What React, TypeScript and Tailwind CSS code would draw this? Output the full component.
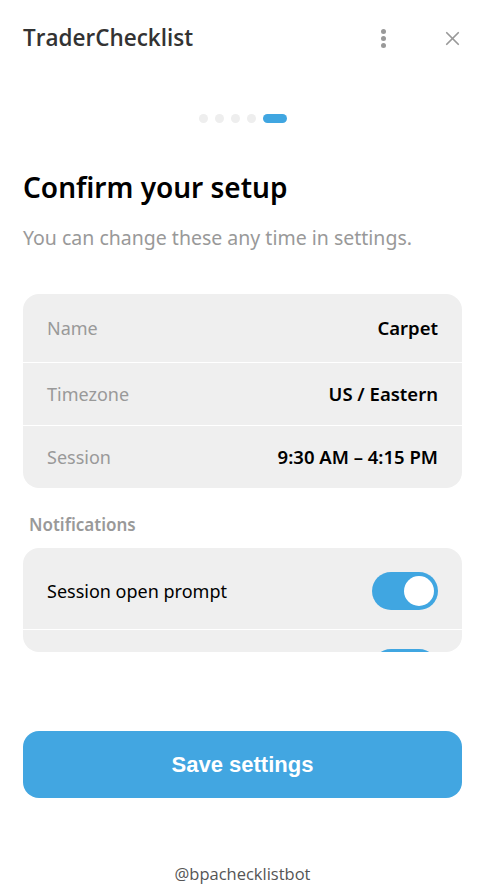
import { X } from "lucide-react";

const rows = [
  { label: "Name", value: "Carpet" },
  { label: "Timezone", value: "US / Eastern" },
  { label: "Session", value: "9:30 AM – 4:15 PM" },
];

const notifications = [
  { label: "Session open prompt", on: true },
  { label: "Session close reminder", on: true },
];

function Toggle({ on }: { on: boolean }) {
  return (
    <div
      className={`flex h-[38px] w-[66px] shrink-0 items-center rounded-full px-1 ${
        on ? "justify-end bg-[#40a6e1]" : "justify-start bg-[#d8d8d8]"
      }`}
    >
      <div className="h-[30px] w-[30px] rounded-full bg-white" />
    </div>
  );
}

export default function App() {
  return (
    <div className="flex min-h-[894px] w-full flex-col bg-white font-['Noto_Sans',sans-serif]">
      {/* header */}
      <div className="flex h-[76px] items-center justify-between pl-[23px] pr-[21px]">
        <span className="font-['Open_Sans',sans-serif] text-[22.5px] font-semibold leading-[28px] text-[#333]">
          TraderChecklist
        </span>
        <div className="flex items-center gap-[55px]">
          <div className="flex flex-col gap-[2px]">
            <span className="h-[5px] w-[5px] rounded-full bg-[#999]" />
            <span className="h-[5px] w-[5px] rounded-full bg-[#999]" />
            <span className="h-[5px] w-[5px] rounded-full bg-[#999]" />
          </div>
          <X size={23} strokeWidth={1.8} className="text-[#999]" />
        </div>
      </div>

      {/* step dots */}
      <div className="mt-[38px] flex items-center justify-center gap-[7px]">
        <span className="h-[9px] w-[9px] rounded-full bg-[#eeeeee]" />
        <span className="h-[9px] w-[9px] rounded-full bg-[#eeeeee]" />
        <span className="h-[9px] w-[9px] rounded-full bg-[#eeeeee]" />
        <span className="h-[9px] w-[9px] rounded-full bg-[#eeeeee]" />
        <span className="h-[9px] w-[24px] rounded-full bg-[#40a6e1]" />
      </div>

      <div className="px-[23px]">
        <h1 className="mt-[46px] text-[28px] font-semibold leading-[36px] text-black">
          Confirm your setup
        </h1>
        <p className="mt-[20px] text-[19.5px] leading-[26px] text-[#999]">
          You can change these any time in settings.
        </p>

        <div className="mt-[43px] overflow-hidden rounded-[16px] bg-[#efefef]">
          {rows.map((row, i) => (
            <div
              key={row.label}
              className={`flex items-center justify-between px-[24px] ${
                i === 0 ? "h-[68px]" : "h-[63px] border-t border-white"
              }`}
            >
              <span className="text-[18px] text-[#999]">{row.label}</span>
              <span className="text-[18.5px] font-semibold text-black">
                {row.value}
              </span>
            </div>
          ))}
        </div>

        <div className="mt-[25px] pl-[6px] text-[17px] font-semibold leading-[24px] text-[#999]">
          Notifications
        </div>

        <div className="mt-[11px] h-[104px] overflow-hidden rounded-[16px] bg-[#efefef] pt-[5px]">
          {notifications.map((n, i) => (
            <div
              key={n.label}
              className={`flex items-center justify-between px-[24px] py-[19px] ${
                i > 0 ? "border-t border-white" : ""
              }`}
            >
              <span className="text-[18px] text-black">{n.label}</span>
              <Toggle on={n.on} />
            </div>
          ))}
        </div>

        <button className="mt-[79px] flex h-[67px] w-full items-center justify-center rounded-[16px] bg-[#42a6e1] font-['Liberation_Sans',sans-serif] text-[22px] font-bold text-white">
          Save settings
        </button>
      </div>

      <div className="mt-[64px] text-center font-['Open_Sans',sans-serif] text-[16.5px] leading-[24px] text-[#555]">
        @bpachecklistbot
      </div>
    </div>
  );
}
